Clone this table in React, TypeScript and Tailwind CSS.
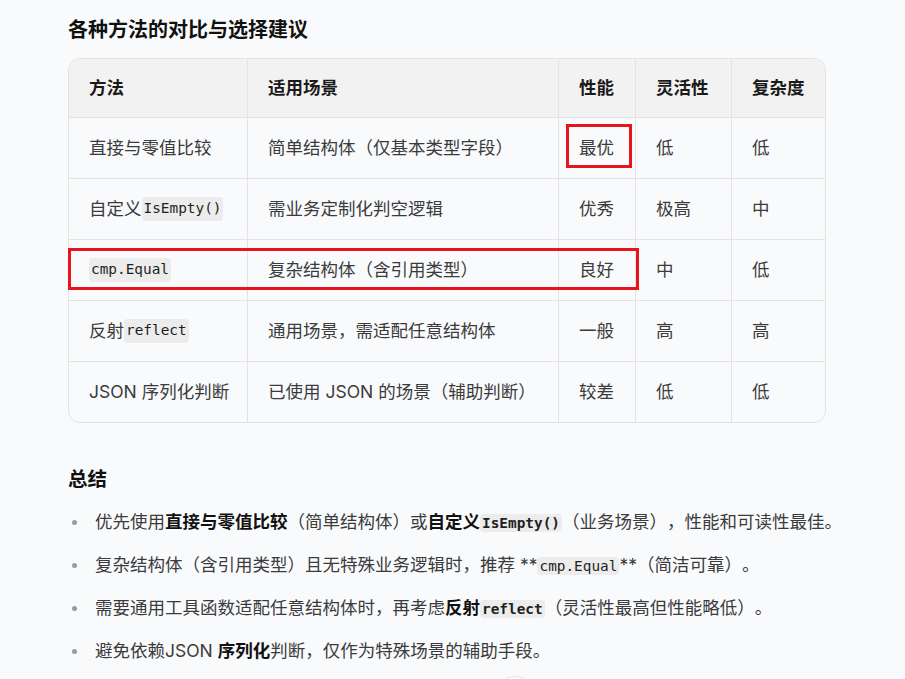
import React from "react";

const font = { fontFamily: '"Inter", "Noto Sans CJK SC", sans-serif' };

function Code({ children, bold = false }: { children: React.ReactNode; bold?: boolean }) {
  return (
    <code
      className={
        "rounded-[4px] bg-[#ececec] px-[2px] py-[1px] text-[14.4px] text-[#1f1f1f] " +
        (bold ? "font-bold" : "font-normal")
      }
      style={{ fontFamily: '"DejaVu Sans Mono", monospace' }}
    >
      {children}
    </code>
  );
}

const headers = ["方法", "适用场景", "性能", "灵活性", "复杂度"];

const rows: React.ReactNode[][] = [
  ["直接与零值比较", "简单结构体（仅基本类型字段）", "最优", "低", "低"],
  [<>自定义<Code>IsEmpty()</Code></>, "需业务定制化判空逻辑", "优秀", "极高", "中"],
  [<Code>cmp.Equal</Code>, "复杂结构体（含引用类型）", "良好", "中", "低"],
  [<>反射<Code>reflect</Code></>, "通用场景，需适配任意结构体", "一般", "高", "高"],
  ["JSON 序列化判断", "已使用 JSON 的场景（辅助判断）", "较差", "低", "低"],
];

function Bullet({ children }: { children: React.ReactNode }) {
  return (
    <li className="flex items-center h-[28px]">
      <span className="w-[27px] flex-none flex">
        <span className="ml-[4px] block h-[5px] w-[5px] rounded-full bg-[#9a9a9a]" />
      </span>
      <span className="whitespace-nowrap">{children}</span>
    </li>
  );
}

export default function App() {
  return (
    <div
      className="relative min-h-[679px] w-[905px] overflow-hidden bg-[#f9fafb] text-[17.5px] text-[#3b3b3b] [text-spacing-trim:space-all]"
      style={font}
    >
      <div className="pl-[68px] pt-[16px]">
        <h2 className="h-[28px] text-[20px] font-bold leading-[28px] text-[#111]">
          各种方法的对比与选择建议
        </h2>

        <div className="relative mt-[14px] w-[758px]">
          <div className="overflow-hidden rounded-[12px] border border-[#e3e3e3]">
            <div className="grid grid-cols-[178px_311px_77px_96px_94px]">
              {headers.map((h, i) => (
                <div
                  key={h}
                  className={
                    "flex h-[58px] items-center bg-[#f2f2f2] pl-[20px] font-bold text-[#1a1a1a] " +
                    (i > 0 ? "border-l border-[#e3e3e3]" : "")
                  }
                >
                  {h}
                </div>
              ))}
              {rows.map((r, ri) =>
                r.map((c, ci) => (
                  <div
                    key={ri + "-" + ci}
                    className={
                      "flex h-[61px] items-center border-t border-[#e3e3e3] pl-[20px] whitespace-nowrap " +
                      (ci > 0 ? "border-l" : "")
                    }
                  >
                    {c}
                  </div>
                ))
              )}
            </div>
          </div>
          <div className="pointer-events-none absolute left-[498px] top-[66px] h-[44px] w-[66px] border-[3px] border-[#e8141c]" />
          <div className="pointer-events-none absolute left-0 top-[190px] h-[42px] w-[571px] border-[3px] border-[#e8141c]" />
        </div>

        <h3 className="mt-[42px] h-[28px] text-[19.5px] font-bold leading-[28px] text-[#111]">总结</h3>

        <ul className="mt-[15px] flex flex-col gap-[15px] pl-0">
          <Bullet>
            优先使用<b className="font-bold text-[#111]">直接与零值比较</b>（简单结构体）或
            <b className="font-bold text-[#111]">自定义</b>
            <Code bold>IsEmpty()</Code>（业务场景），性能和可读性最佳。
          </Bullet>
          <Bullet>
            复杂结构体（含引用类型）且无特殊业务逻辑时，推荐 **<Code>cmp.Equal</Code>**（简洁可靠）。
          </Bullet>
          <Bullet>
            需要通用工具函数适配任意结构体时，再考虑<b className="font-bold text-[#111]">反射</b>
            <Code bold>reflect</Code>（灵活性最高但性能略低）。
          </Bullet>
          <Bullet>
            避免依赖JSON <b className="font-bold text-[#111]">序列化</b>判断，仅作为特殊场景的辅助手段。
          </Bullet>
        </ul>
      </div>

      <div className="absolute left-[497px] top-[676px] h-[36px] w-[36px] rounded-full border border-[#e5e5e5] bg-white" />
    </div>
  );
}
